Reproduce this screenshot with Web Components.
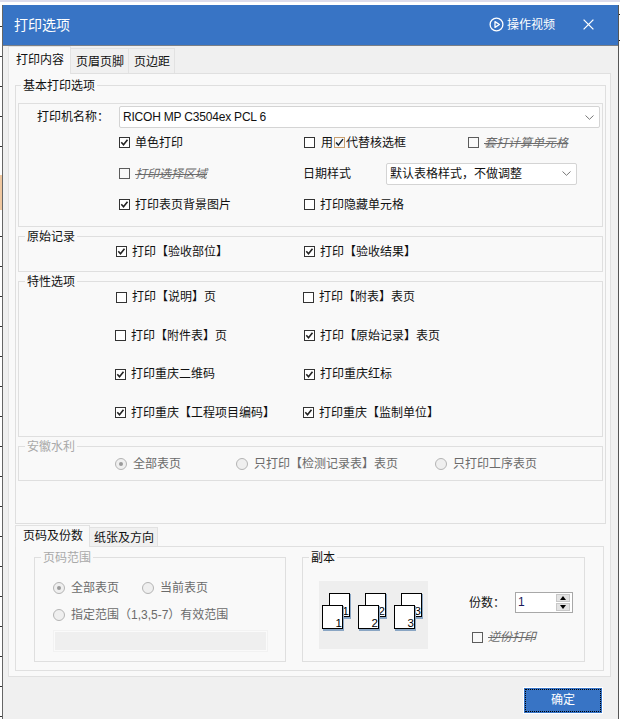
<!DOCTYPE html>
<html lang="zh">
<head>
<meta charset="utf-8">
<title>打印选项</title>
<style>
  html, body { margin: 0; height: 719px; overflow: hidden; }
  body {
    background:
      linear-gradient(#dcdcec, #dcdcec) 0 0 / 100% 2px no-repeat,
      linear-gradient(#f0c8a0, #f0c8a0) 0 175px / 2px 35px no-repeat,
      repeating-linear-gradient(#fff 0 26px, #333 26px 27px, #fff 27px 30px) 0 0 / 2px 100% no-repeat,
      repeating-linear-gradient(#fff 0 14px, #222 14px 15px, #fff 15px 26px) 618px 0 / 2px 60px no-repeat,
      #fff;
    font: 12px/16px "Liberation Sans", "Noto Sans CJK SC", sans-serif;
    color: #111;
  }
  #outer { height: 439px; --legend-x: 5px; }
  #outer group-box { --legend-x: 6px; }
  #box-base { height: 124px; padding-top: 2px; }
  #box-raw { height: 36px; }
  #box-feature { height: 156px; padding-top: 5px; }
  #box-water { height: 35px; }
  #box-raw, #box-feature, #box-water { margin-top: 9px; }
  #range { width: 252px; height: 105px; }
  #copies { width: 283px; height: 105px; }
  .range-row { display: flex; height: 18px; margin-left: 18px; }
  .range-row + .range-row { margin-top: 9px; }
  .range-row radio-box:first-child:not(:last-child) { width: 89px; }
  .copies-side { margin: 11px 0 0 41px; }
  .copies-row { display: flex; align-items: center; height: 21px; }
  .copies-row span { width: 46px; }
  .reverse { margin: 16px 0 0 3px; }
  .copies-body { display: flex; padding: 23px 0 0 16px; }
  .printer-row { display: flex; align-items: center; padding-left: 18px; }
  .printer-row span { width: 82px; }
  .printer-row printer-combo { width: 481px; letter-spacing: -.2px; }
  .date-cell { display: flex; align-items: center; grid-column: span 2; margin-left: -1px; }
  .date-cell span { width: 83px; }
  .date-cell printer-combo { width: 191px; }
  .mark { display: inline-block; vertical-align: -1px; margin: 0 1px; }
  .wide { gap: 6px; }
  .in { margin-left: 1px; }
  .out { margin-left: -1px; }
  opt-grid { --pad: 97px; --cols: 188px 188px; --row: 20px; }
  #grid-base { --pad: 100px; --cols: 185px 164px 130px; --row: 31px; margin-top: -1px; }
  #grid-raw { --row: 29px; }
  #grid-feature { --pad: 96px; --cols: 189px 188px; --gap: 18.5px; }
  #grid-water { --pad: 96px; --cols: 121px 199px 140px; --row: 34px; }
</style>
<script>
class PrintDialog extends HTMLElement {
  connectedCallback() {
    if (this.shadowRoot) return;
    this.attachShadow({ mode: 'open' });
    this.shadowRoot.innerHTML = `
      <style>
        :host { display: block; margin: 5px 1px 0 2px; height: 714px; background: #f0f0f0;
          border-left: 1px solid #666; border-right: 1px solid #555; box-sizing: border-box; }
        header { display: flex; align-items: center; height: 40px; background: #3874c5; color: #fff;
          border-bottom: 1px solid #7a7f86; padding: 0 24px 0 11px; }
        h1 { flex: 1; margin: 0; font: inherit; font-size: 14px; line-height: 42px; }
        .video { display: flex; align-items: center; gap: 3px; margin-bottom: 1px; }
        .close { margin-left: 28px; display: flex; margin-bottom: 1px; }
        svg { display: block; }
        main { padding-left: 5px; }
        footer { display: flex; justify-content: flex-end; padding: 10px 15px 0 0; }
      </style>
      <header>
        <h1>${this.getAttribute('heading')}</h1>
        <div class="video">
          <svg width="15" height="15" viewBox="0 0 15 15" fill="none" stroke="#fff" stroke-width="1.3">
            <circle cx="7.5" cy="7.5" r="6.4"/><path d="M6 4.6v5.8l4.4-2.9z" stroke-linejoin="round"/>
          </svg>
          <span>操作视频</span>
        </div>
        <div class="close">
          <svg width="11" height="11" viewBox="0 0 11 11" stroke="#fff" stroke-width="1.3"><path d="M.6.6l9.8 9.8M10.4.6L.6 10.4"/></svg>
        </div>
      </header>
      <main><slot></slot></main>
      <footer><slot name="actions"></slot></footer>`;
  }
}

class TabStrip extends HTMLElement {
  connectedCallback() {
    if (this.shadowRoot) return;
    this.attachShadow({ mode: 'open' });
    const tabs = this.getAttribute('tabs').split(',');
    this.shadowRoot.innerHTML = `
      <style>
        :host { display: flex; align-items: flex-end; position: relative; z-index: 1; margin-bottom: -1px; }
        div { box-sizing: border-box; height: var(--tab-h, 25px); line-height: calc(var(--tab-h, 25px) + 2px);
          padding: 0 var(--tab-pad, 4px) 0 calc(var(--tab-pad, 4px) + 1px); background: #f0f0f0; border: 1px solid #e2e2e2; border-bottom: 0; margin-bottom: 1px; white-space: nowrap; }
        div.on { height: calc(var(--tab-h, 25px) + 3px); padding: 0 6px 0 7px; background: #f9f9f9;
          margin-bottom: 0; }
        div + div { border-left: 0; }
      </style>
      ${tabs.map((t, i) => `<div class="${i === 0 ? 'on' : ''}">${t}</div>`).join('')}`;
  }
}

class TabPanel extends HTMLElement {
  connectedCallback() {
    if (this.shadowRoot) return;
    this.attachShadow({ mode: 'open' });
    this.shadowRoot.innerHTML = `
      <style>
        :host { display: block; box-sizing: border-box; background: #f9f9f9; border: 1px solid #e0e0e0; }
      </style>
      <slot></slot>`;
  }
}

class GroupBox extends HTMLElement {
  connectedCallback() {
    if (this.shadowRoot) return;
    this.attachShadow({ mode: 'open' });
    const label = this.getAttribute('label');
    this.shadowRoot.innerHTML = `
      <style>
        :host { display: block; box-sizing: border-box; position: relative; background: #f9f9f9; border: 1px solid #dfdfdf; }
        .legend { position: absolute; top: -8px; left: var(--legend-x, 6px); padding: 0 2px; background: #f9f9f9; }
        :host([off]) .legend { color: #a9a9a9; }
      </style>
      ${label ? `<div class="legend">${label}</div>` : ''}
      <slot></slot>`;
  }
}

class OptGrid extends HTMLElement {
  connectedCallback() {
    if (this.shadowRoot) return;
    this.attachShadow({ mode: 'open' });
    this.shadowRoot.innerHTML = `
      <style>
        :host { display: grid; grid-template-columns: var(--cols); grid-auto-rows: var(--row);
          row-gap: var(--gap, 0); padding-left: var(--pad); align-items: center; }
      </style>
      <slot></slot>`;
  }
}

class CheckBox extends HTMLElement {
  connectedCallback() {
    if (this.shadowRoot) return;
    this.attachShadow({ mode: 'open' });
    const checked = this.hasAttribute('checked');
    this.shadowRoot.innerHTML = `
      <style>
        :host { display: flex; align-items: center; gap: 5px; white-space: nowrap; }
        .box { box-sizing: border-box; flex: none; width: 11px; height: 11px; border: 1px solid #333; background: #fff; }
        svg { display: block; }
        :host([struck]) { color: #6a6a6a; }
        :host([struck]) .box { border-color: #5c5c5c; background: transparent; }
        :host([struck]) .txt { font-style: italic; text-decoration: line-through; font-size: 12px; }
      </style>
      <div class="box">${checked ? `<svg width="9" height="9" viewBox="0 0 9 9" fill="none" stroke="#222" stroke-width="1.6"><path d="M1.3 4.2l2.2 2.5 4-5"/></svg>` : ''}</div>
      <div class="txt"><slot></slot></div>`;
  }
}

class RadioBox extends HTMLElement {
  connectedCallback() {
    if (this.shadowRoot) return;
    this.attachShadow({ mode: 'open' });
    this.shadowRoot.innerHTML = `
      <style>
        :host { display: flex; align-items: center; gap: 6px; white-space: nowrap; color: #6b6b6b; }
        .dot { box-sizing: border-box; flex: none; width: 12px; height: 12px; border: 1px solid #b4b4b4; border-radius: 50%;
          background: #efefef; display: flex; align-items: center; justify-content: center; }
        i { width: 4px; height: 4px; border-radius: 50%; background: #9a9a9a; }
      </style>
      <div class="dot">${this.hasAttribute('checked') ? '<i></i>' : ''}</div>
      <div><slot></slot></div>`;
  }
}

class PrinterCombo extends HTMLElement {
  connectedCallback() {
    if (this.shadowRoot) return;
    this.attachShadow({ mode: 'open' });
    this.shadowRoot.innerHTML = `
      <style>
        :host { display: flex; align-items: center; box-sizing: border-box; height: 22px; background: #fff;
          border: 1px solid #d4d4d4; border-radius: 2px; padding: 0 5px 0 3px; white-space: nowrap; }
        .val { flex: 1; }
      </style>
      <div class="val"><slot></slot></div>
      <svg width="9" height="5" viewBox="0 0 9 5" fill="none" stroke="#777" stroke-width="1"><path d="M.5.5l4 3.8 4-3.8"/></svg>`;
  }
}

class CopiesPreview extends HTMLElement {
  connectedCallback() {
    if (this.shadowRoot) return;
    this.attachShadow({ mode: 'open' });
    const pair = (x, n) => `
      <g transform="translate(${x} 0)">
        <rect x="11" y="13" width="21" height="25" fill="#8aa6c4"/>
        <rect x="10.5" y="12.5" width="20" height="23" fill="#fff" stroke="#000"/>
        <text x="23.6" y="33.8" font-size="11.5">${n}</text>
        <rect x="4" y="25" width="21" height="25" fill="#8aa6c4"/>
        <rect x="3.5" y="24.5" width="20" height="23" fill="#fff" stroke="#000"/>
        <text x="16.6" y="45.5" font-size="11.5">${n}</text>
      </g>`;
    this.shadowRoot.innerHTML = `
      <style>
        :host { display: block; flex: none; width: 109px; height: 68px; background: #eee; }
        svg { display: block; }
        text { font-family: "Liberation Sans", sans-serif; fill: #000; }
      </style>
      <svg width="109" height="68" viewBox="0 0 109 68">${pair(0, 1)}${pair(36, 2)}${pair(72, 3)}</svg>`;
  }
}

class SpinBox extends HTMLElement {
  connectedCallback() {
    if (this.shadowRoot) return;
    this.attachShadow({ mode: 'open' });
    this.shadowRoot.innerHTML = `
      <style>
        :host { display: flex; box-sizing: border-box; width: 58px; height: 21px; background: #fff;
          border: 1px solid #a8a8a8; padding: 1px 2px 1px 2px; }
        .val { flex: 1; line-height: 16px; color: #1a1a5a; }
        .btns { display: flex; flex-direction: column; gap: 1px; width: 14px; }
        .btns div { flex: 1; background: #e3e3e3; border: 1px solid #c8c8c8; display: flex; align-items: center; justify-content: center; }
        b { width: 0; height: 0; border: 3.5px solid transparent; }
        .up { border-bottom: 4px solid #000; border-top: 0; }
        .down { border-top: 4px solid #000; border-bottom: 0; }
      </style>
      <div class="val"><slot></slot></div>
      <div class="btns"><div><b class="up"></b></div><div><b class="down"></b></div></div>`;
  }
}

class OkButton extends HTMLElement {
  connectedCallback() {
    if (this.shadowRoot) return;
    this.attachShadow({ mode: 'open' });
    this.shadowRoot.innerHTML = `
      <style>
        :host { display: block; box-sizing: border-box; width: 80px; height: 27px; background: #3874c5; color: #fff;
          border: 1px solid #fff; padding: 1px; }
        div { box-sizing: border-box; height: 100%; border: 1px dotted #000; text-align: center; line-height: 21px; font-size: 12px; }
      </style>
      <div><slot></slot></div>`;
  }
}

class InputSlot extends HTMLElement {
  connectedCallback() {
    if (this.shadowRoot) return;
    this.attachShadow({ mode: 'open' });
    this.shadowRoot.innerHTML = `
      <style>
        :host { display: block; box-sizing: border-box; width: 215px; height: 22px; margin: 6px 0 0 18px;
          background: #efefef; border: 1px solid #f2f2f2; box-shadow: inset 0 0 0 1px #fafafa; }
      </style>`;
  }
}

customElements.define('print-dialog', PrintDialog);
customElements.define('tab-strip', TabStrip);
customElements.define('tab-panel', TabPanel);
customElements.define('group-box', GroupBox);
customElements.define('opt-grid', OptGrid);
customElements.define('check-box', CheckBox);
customElements.define('radio-box', RadioBox);
customElements.define('printer-combo', PrinterCombo);
customElements.define('copies-preview', CopiesPreview);
customElements.define('spin-box', SpinBox);
customElements.define('ok-button', OkButton);
customElements.define('input-slot', InputSlot);
</script>
</head>
<body>
<print-dialog heading="打印选项">
  <tab-strip tabs="打印内容,页眉页脚,页边距"></tab-strip>
  <tab-panel style="width:603px;height:604px;padding:11px 0 0 6px">
    <group-box id="outer" label="基本打印选项" style="width:591px;padding:17px 0 0 2px">
      <group-box id="box-base" style="width:585px">
        <div class="printer-row"><span>打印机名称：</span><printer-combo>RICOH MP C3504ex PCL 6</printer-combo></div>
        <opt-grid id="grid-base">
          <check-box checked>单色打印</check-box>
          <check-box class="wide">用<svg class="mark" width="11" height="11" viewBox="0 0 11 11" fill="none"><rect x=".5" y=".5" width="10" height="10" stroke="#c9a070"/><path d="M2 5.5l2.4 2.6 4.6-6" stroke="#123" stroke-width="1.5"/></svg>代替核选框</check-box>
          <check-box struck>套打计算单元格</check-box>
          <check-box struck>打印选择区域</check-box>
          <div class="date-cell"><span>日期样式</span><printer-combo>默认表格样式，不做调整</printer-combo></div>
          <check-box checked>打印表页背景图片</check-box>
          <check-box>打印隐藏单元格</check-box>
        </opt-grid>
      </group-box>
      <group-box id="box-raw" label="原始记录" style="width:585px">
        <opt-grid id="grid-raw">
          <check-box checked>打印【验收部位】</check-box>
          <check-box checked>打印【验收结果】</check-box>
        </opt-grid>
      </group-box>
      <group-box id="box-feature" label="特性选项" style="width:585px">
        <opt-grid id="grid-feature">
          <check-box class="in">打印【说明】页</check-box>
          <check-box class="out">打印【附表】表页</check-box>
          <check-box>打印【附件表】页</check-box>
          <check-box checked>打印【原始记录】表页</check-box>
          <check-box checked>打印重庆二维码</check-box>
          <check-box checked>打印重庆红标</check-box>
          <check-box checked>打印重庆【工程项目编码】</check-box>
          <check-box class="out" checked>打印重庆【监制单位】</check-box>
        </opt-grid>
      </group-box>
      <group-box id="box-water" label="安徽水利" off style="width:585px">
        <opt-grid id="grid-water">
          <radio-box checked>全部表页</radio-box>
          <radio-box>只打印【检测记录表】表页</radio-box>
          <radio-box>只打印工序表页</radio-box>
        </opt-grid>
      </group-box>
    </group-box>
    <tab-strip tabs="页码及份数,纸张及方向" style="--tab-h:19px;--tab-pad:3px;margin-top:1px"></tab-strip>
    <tab-panel style="width:589px;height:125px;padding:10px 0 0 18px;display:flex;gap:16px">
      <group-box id="range" label="页码范围" off>
        <div style="height:21px"></div>
        <div class="range-row"><radio-box checked>全部表页</radio-box><radio-box>当前表页</radio-box></div>
        <div class="range-row"><radio-box>指定范围（1,3,5-7）有效范围</radio-box></div>
        <input-slot></input-slot>
      </group-box>
      <group-box id="copies" label="副本">
        <div class="copies-body">
          <copies-preview></copies-preview>
          <div class="copies-side">
            <div class="copies-row"><span>份数：</span><spin-box>1</spin-box></div>
            <check-box class="reverse" struck>逆份打印</check-box>
          </div>
        </div>
      </group-box>
    </tab-panel>
  </tab-panel>
  <ok-button slot="actions">确定</ok-button>
</print-dialog>
</body>
</html>
